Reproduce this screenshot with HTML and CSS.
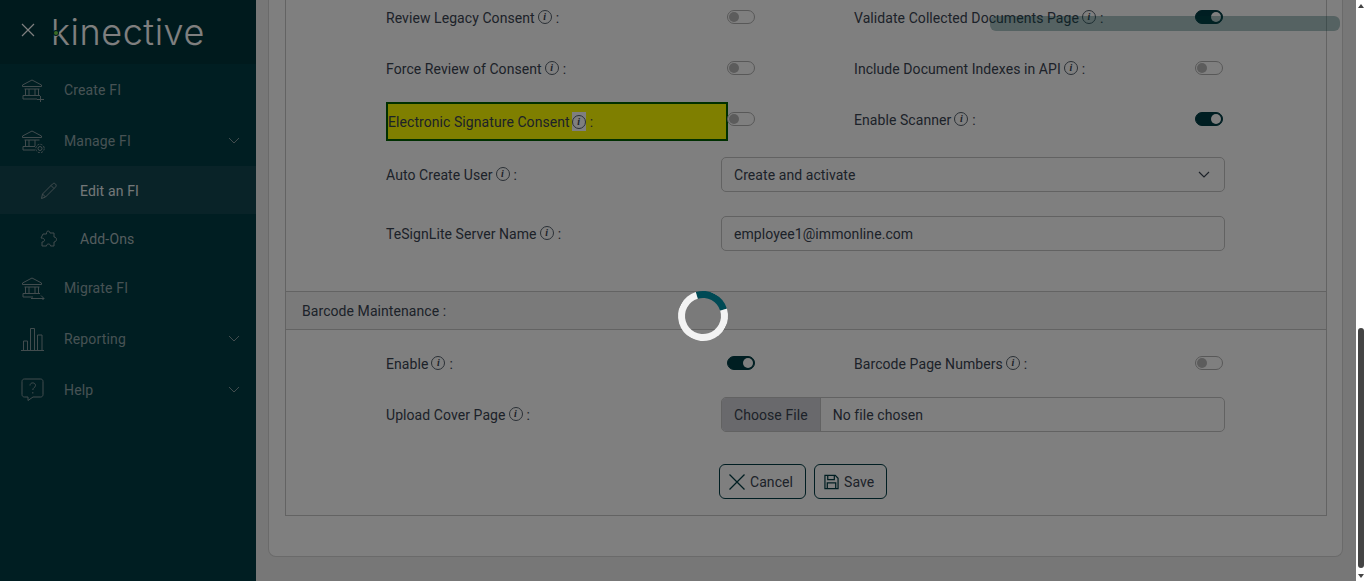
FILE: index.html
```html
<!DOCTYPE html>
<html lang="en">
<head>
    <meta charset="UTF-8">
    <title>Edit an FI</title>
    <link rel="stylesheet" href="styles.css">
</head>
<body>
    <div class="page">
        <aside class="sidebar">
            <div class="brand">
                <svg class="close" width="14" height="14" viewBox="0 0 14 14"><path d="M1 1l12 12M13 1L1 13"/></svg>
                <span class="logo">kinective<i class="logo-dot"></i></span>
            </div>
            <nav class="menu">
                <a class="item">
                    <svg class="icon" width="24" height="24" viewBox="0 0 24 24"><path d="M1.500 7L11 2l9.500 5v1.500h-19zM3.500 11h15M4.500 11v6M8 11v6M14 11v6M17.500 11v6M2 17.500h17M2 17.500v3.500h14"/><path d="M16 21.500h7M19.500 18v7"/></svg>
                    <span>Create FI</span>
                </a>
                <a class="item">
                    <svg class="icon" width="24" height="24" viewBox="0 0 24 24"><path d="M1.500 7L11 2l9.500 5v1.500h-19zM3.500 11h15M4.500 11v6M8 11v6M14 11v6M2 17.500h12M2 17.500v3.500h12"/><circle cx="19" cy="19.500" r="2"/><circle cx="19" cy="19.500" r="4.200" stroke-dasharray="2 1.300"/></svg>
                    <span>Manage FI</span>
                    <svg class="chevron" width="12" height="7" viewBox="0 0 12 7"><path d="M1 1l5 5 5-5"/></svg>
                </a>
                <a class="item sub active">
                    <svg class="icon" width="18" height="18" viewBox="0 0 18 18"><path d="M1.500 16.500l1-4.500L12.500 2c1-1 2.200-1 3 0s1 2 0 3l-10 10zM2.500 12l3 3M11 3.500l3 3"/></svg>
                    <span>Edit an FI</span>
                </a>
                <a class="item sub">
                    <svg class="icon" width="18" height="18" viewBox="0 0 18 18"><path d="M7 1.500c1-1 3-.5 3 1.500h4v4c2 0 2.500 1.500 2.500 2.500S15.500 12 14 12v4h-3.500c0-1.500-1-2-2-2s-2 .5-2 2H2v-4c2 0 2.500-1 2.500-2S3.500 8 1 8l2-4h3.500c0-1 0-2 .5-2.500z"/></svg>
                    <span>Add-Ons</span>
                </a>
                <a class="item">
                    <svg class="icon" width="24" height="24" viewBox="0 0 24 24"><path d="M1.500 7L11 2l9.500 5v1.500h-19zM3.500 11h15M4.500 11v6M8 11v6M14 11v6M17.500 11v6M2 17.500h17M2 17.500v3.500h10"/><path d="M10 22.500h13M20 19.500l3 3-3 3"/></svg>
                    <span>Migrate FI</span>
                </a>
                <a class="item">
                    <svg class="icon" width="24" height="24" viewBox="0 0 24 24"><path d="M0 23.500h23M2.500 23.500V14h4v9.500M9.500 23.500V1.500h4v22M16.500 23.500V8h4.500v15.500"/></svg>
                    <span>Reporting</span>
                    <svg class="chevron" width="12" height="7" viewBox="0 0 12 7"><path d="M1 1l5 5 5-5"/></svg>
                </a>
                <a class="item">
                    <svg class="icon" width="24" height="24" viewBox="0 0 24 24"><path d="M3.500 1h16c1.500 0 2.500 1 2.500 2.500v13c0 1.500-1 2.500-2.500 2.500H12l-5 3.500V19H3.500C2 19 1 18 1 16.500v-13C1 2 2 1 3.500 1z"/><path d="M9 7.500c0-3.500 5.500-3.500 5.500 0 0 2-2.700 2-2.700 4.500M11.800 14v1.500"/></svg>
                    <span>Help</span>
                    <svg class="chevron" width="12" height="7" viewBox="0 0 12 7"><path d="M1 1l5 5 5-5"/></svg>
                </a>
            </nav>
        </aside>

        <main class="content">
            <div class="card">
                <div class="panel">
                    <div class="form-grid">
                        <label class="field">Review Legacy Consent<i class="info">i</i><b>:</b></label>
                        <div class="cell"><span class="toggle"></span></div>
                        <label class="field">Validate Collected Documents Page<i class="info">i</i><b>:</b></label>
                        <div class="cell"><span class="toggle on"></span></div>

                        <label class="field">Force Review of Consent<i class="info">i</i><b>:</b></label>
                        <div class="cell"><span class="toggle"></span></div>
                        <label class="field">Include Document Indexes in API<i class="info">i</i><b>:</b></label>
                        <div class="cell"><span class="toggle"></span></div>

                        <label class="field highlighted">Electronic Signature Consent<span class="marked"><i class="info">i</i></span><b>:</b></label>
                        <div class="cell"><span class="toggle"></span></div>
                        <label class="field">Enable Scanner<i class="info">i</i><b>:</b></label>
                        <div class="cell"><span class="toggle on"></span></div>
                    </div>

                    <div class="wide-row first">
                        <label class="field">Auto Create User<i class="info">i</i><b>:</b></label>
                        <div class="control select">
                            <span>Create and activate</span>
                            <svg width="12" height="7" viewBox="0 0 12 7"><path d="M1 1l5 5 5-5"/></svg>
                        </div>
                    </div>
                    <div class="wide-row second">
                        <label class="field">TeSignLite Server Name<i class="info">i</i><b>:</b></label>
                        <div class="control">employee1@immonline.com</div>
                    </div>

                    <div class="section-title">Barcode Maintenance :</div>

                    <div class="form-grid barcode">
                        <label class="field">Enable<i class="info">i</i><b>:</b></label>
                        <div class="cell"><span class="toggle on"></span></div>
                        <label class="field">Barcode Page Numbers<i class="info">i</i><b>:</b></label>
                        <div class="cell"><span class="toggle"></span></div>
                    </div>

                    <div class="wide-row upload">
                        <label class="field">Upload Cover Page<i class="info">i</i><b>:</b></label>
                        <div class="control file">
                            <span class="file-btn">Choose File</span>
                            <span class="file-name">No file chosen</span>
                        </div>
                    </div>

                    <div class="actions">
                        <button class="btn">
                            <svg width="16" height="16" viewBox="0 0 16 16"><path d="M.500 .500l15 15M15.500 .500l-15 15"/></svg>
                            Cancel
                        </button>
                        <button class="btn">
                            <svg class="save" width="15" height="16" viewBox="0 0 16 16"><path d="M1 1h11l3 3v11H1zM4 1v4.500h7V1M3.500 15V9h9v6"/></svg>
                            Save
                        </button>
                    </div>
                </div>
            </div>
        </main>

        <div class="scrollbar">
            <span class="arrow up"></span>
            <span class="thumb"></span>
            <span class="arrow down"></span>
        </div>

        <div class="overlay"></div>
        <div class="tooltip-bar"></div>
        <div class="spinner"></div>
    </div>
</body>
</html>
```

FILE: styles.css
```css
* {
    box-sizing: border-box;
}
body {
    margin: 0;
    font-family: Roboto, "Liberation Sans", sans-serif;
    font-size: 14px;
    letter-spacing: 0.07px;
    color: #3a4452;
    overflow: hidden;
}
.page {
    position: relative;
    display: flex;
    height: 100vh;
    background-color: #eee;
}

/* sidebar */
.sidebar {
    width: 256px;
    flex-shrink: 0;
    background-color: #003c44;
}
.brand {
    display: flex;
    align-items: center;
    height: 64px;
    padding-left: 21px;
    background-color: #00343b;
}
.close {
    margin-bottom: 4px;
}
.close path {
    fill: none;
    stroke: #fff;
    stroke-width: 1.2;
}
.logo {
    position: relative;
    margin-left: 16px;
    font-family: Inter, "Liberation Sans", sans-serif;
    font-size: 36px;
    font-weight: 300;
    letter-spacing: 0.55px;
    line-height: 64px;
    color: #fff;
}
.logo-dot {
    position: absolute;
    left: 3px;
    top: 31px;
    width: 4px;
    height: 4px;
    border-radius: 50%;
    background-color: #6fd24a;
    box-shadow: 0 0 0 1px #00343b;
}
.item {
    display: flex;
    align-items: center;
    height: 51px;
    padding-left: 21px;
    padding-right: 16px;
    letter-spacing: 0.15px;
    color: #8ea4a8;
}
.item .icon {
    margin-right: 19px;
    flex-shrink: 0;
}
.item svg path,
.item svg circle {
    fill: none;
    stroke: #84999d;
    stroke-width: 1;
}
.chevron {
    margin-left: auto;
}
.item.sub {
    height: 48px;
    padding-top: 2px;
    padding-left: 40px;
    color: #a9babd;
}
.item.sub .icon {
    margin-right: 22px;
}
.item.active {
    background-color: #124650;
    color: #e6eef0;
}

/* main */
.content {
    flex: 1;
    min-width: 0;
    padding: 0 13px 0 12px;
    background-color: #eee;
}
.card {
    height: 565px;
    padding: 0 15px 0 16px;
    background-color: #fff;
    border: 1px solid #d4d4d4;
    border-top: 0;
    border-radius: 0 0 8px 8px;
}
.panel {
    height: 524px;
    border: 1px solid #c6c6c6;
    border-top: 0;
}
.form-grid {
    display: grid;
    grid-template-columns: 341px 127px 341px 130px;
    grid-auto-rows: 51px;
    margin-top: -8px;
    padding-left: 100px;
}
.field {
    display: flex;
    align-items: center;
    white-space: nowrap;
}
.field b {
    font-weight: 400;
    margin-left: 4px;
}
.info {
    display: inline-block;
    width: 14px;
    height: 14px;
    margin-left: 3px;
    margin-top: -1px;
    border: 1px solid #55606c;
    border-radius: 50%;
    font-family: "Liberation Serif", serif;
    font-size: 10px;
    font-weight: 700;
    line-height: 12px;
    text-align: center;
}
.highlighted {
    width: 342px;
    height: 39px;
    margin-top: 8px;
    background-color: #ffff00;
    border: 2px solid #006000;
}
.marked {
    display: flex;
    align-items: center;
    height: 19px;
    margin-left: 2px;
    background-color: #fff;
}
.marked .info {
    margin: 0;
}
.cell {
    display: flex;
    align-items: center;
    height: 100%;
}
.toggle {
    position: relative;
    display: block;
    width: 28px;
    height: 14px;
    margin-top: -1px;
    border: 1px solid #b0b0b0;
    border-radius: 7px;
}
.toggle::after {
    content: "";
    position: absolute;
    top: 1px;
    left: 1px;
    width: 10px;
    height: 10px;
    border-radius: 50%;
    background-color: #b8b8b8;
}
.toggle.on {
    background-color: #003c44;
    border-color: #003c44;
}
.toggle.on::after {
    left: auto;
    right: 1px;
    background-color: #fff;
}
.wide-row {
    display: flex;
    padding-left: 100px;
}
.wide-row .field {
    width: 335px;
}
.wide-row.first {
    margin-top: 12px;
}
.wide-row.second {
    margin-top: 24px;
}
.wide-row.upload {
    margin-top: 8px;
}
.control {
    display: flex;
    align-items: center;
    justify-content: space-between;
    width: 504px;
    height: 35px;
    padding: 0 14px 0 12px;
    border: 1px solid #c4c4c4;
    border-radius: 5px;
}
.select path {
    fill: none;
    stroke: #3a4452;
    stroke-width: 1.2;
}
.section-title {
    display: flex;
    align-items: center;
    height: 39px;
    margin-top: 40px;
    padding-left: 16px;
    background-color: #f5f5f5;
    border-top: 1px solid #c6c6c6;
    border-bottom: 1px solid #c6c6c6;
}
.form-grid.barcode {
    margin-top: 8px;
}
.file {
    justify-content: flex-start;
    padding: 0;
    overflow: hidden;
}
.file-btn {
    display: flex;
    align-items: center;
    height: 100%;
    padding: 0 12px;
    background-color: #d2d3d8;
    border-right: 1px solid #c4c4c4;
}
.file-name {
    padding-left: 12px;
}
.actions {
    display: flex;
    gap: 8px;
    margin-top: 32px;
    padding-left: 433px;
}
.btn {
    display: flex;
    align-items: center;
    gap: 5px;
    height: 35px;
    padding: 0 12px 0 9px;
    background: none;
    border: 1px solid #003c44;
    border-radius: 6px;
    font: inherit;
    letter-spacing: inherit;
    color: inherit;
}
.btn path {
    fill: none;
    stroke: #003c44;
    stroke-width: 1.3;
}

/* browser scrollbar */
.scrollbar {
    position: relative;
    width: 10px;
    flex-shrink: 0;
    background-color: #fff;
    z-index: 3;
}
.thumb {
    position: absolute;
    left: 2px;
    top: 328px;
    width: 6px;
    height: 240px;
    border-radius: 3px;
    background-color: #444;
}
.arrow {
    position: absolute;
    left: 2px;
    border-left: 3px solid transparent;
    border-right: 3px solid transparent;
}
.arrow.up {
    top: 4px;
    border-bottom: 4px solid #444;
}
.arrow.down {
    bottom: 3px;
    border-top: 4px solid #444;
}

/* loading state */
.overlay {
    position: absolute;
    inset: 0;
    background-color: rgba(0, 0, 0, 0.5);
    z-index: 1;
}
.tooltip-bar {
    position: absolute;
    left: 990px;
    top: 16px;
    width: 350px;
    height: 15px;
    border-radius: 6px;
    background-color: rgba(0, 40, 40, 0.33);
    z-index: 2;
}
.spinner {
    position: absolute;
    left: 678px;
    top: 291px;
    width: 50px;
    height: 50px;
    border: 7px solid #f3f3f3;
    border-top-color: #004a55;
    border-radius: 50%;
    transform: rotate(28deg);
    z-index: 2;
}
```
